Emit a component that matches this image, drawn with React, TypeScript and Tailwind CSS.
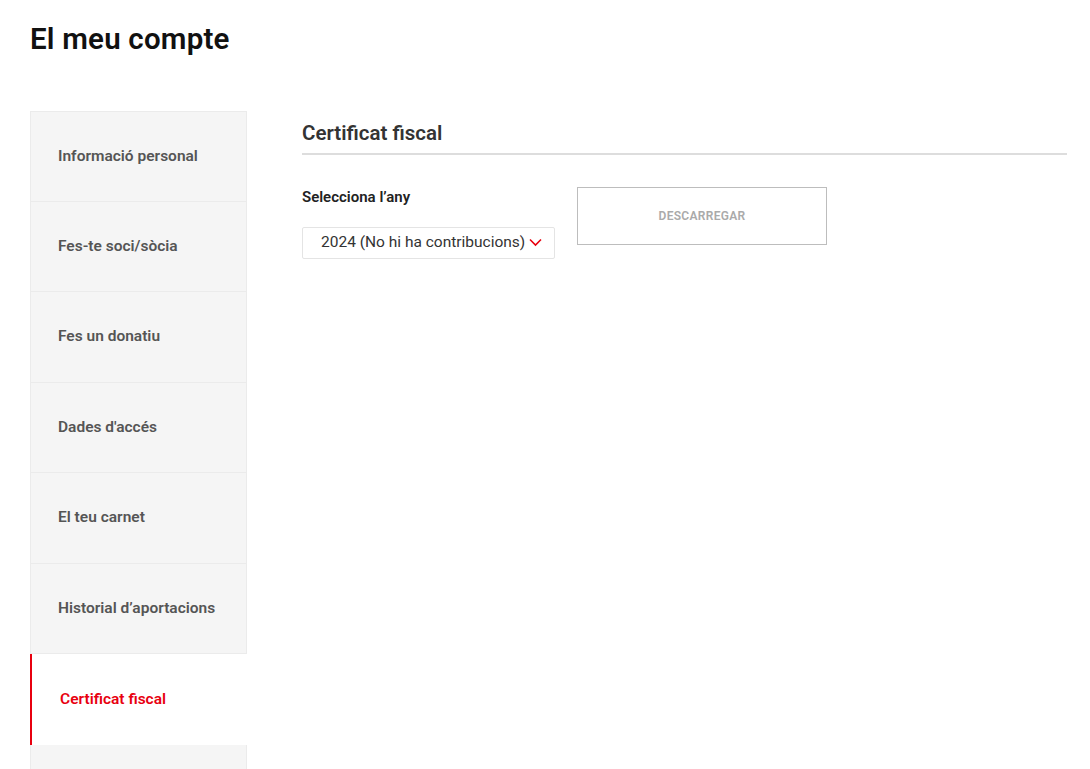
import React from "react";

const items = [
  "Informació personal",
  "Fes-te soci/sòcia",
  "Fes un donatiu",
  "Dades d'accés",
  "El teu carnet",
  "Historial d’aportacions",
  "Certificat fiscal",
  "",
];

const App = () => {
  return (
    <div className="min-h-screen bg-white pl-[30px] pr-[23px] pt-[22px] text-[#333]" style={{ fontFamily: "Roboto, 'Liberation Sans', sans-serif" }}>
      <h1 className="text-[29.5px] font-semibold text-[#111] leading-[34px] tracking-[0.2px]">El meu compte</h1>
      <div className="flex mt-[55px] gap-[55px]">
        <ul className="w-[217px] shrink-0">
          {items.map((label, i) => {
            const active = label === "Certificat fiscal";
            return (
              <li
                key={i}
                className={
                  active
                    ? "h-[90.5px] flex items-center bg-white border-l-2 border-[#e8000f] pl-[28px] text-[15.5px] font-semibold text-[#e8000f]"
                    : "h-[90.5px] flex items-center bg-[#f5f5f5] border border-[#ebebeb] border-t-0 first:border-t pl-[27px] text-[15.5px] font-semibold text-[#555]"
                }
              >
                {label}
              </li>
            );
          })}
        </ul>
        <div className="flex-1 pt-[10px]">
          <h2 className="text-[20.5px] font-semibold text-[#333] pb-[8px] border-b-2 border-[#ddd] leading-[24px]">Certificat fiscal</h2>
          <div className="flex gap-[22px] mt-[32px]">
            <div>
              <div className="text-[15px] font-semibold text-[#222] mt-[-1px]">Selecciona l’any</div>
              <div className="mt-[18px] w-[253px] h-[32px] border border-[#e4e4e4] rounded-[2px] flex items-center pl-[18px] text-[15.5px] text-[#333]">
                2024 (No hi ha contribucions)
                <svg className="ml-[4px]" width="13" height="9" viewBox="0 0 13 9" fill="none" stroke="#e8000f" strokeWidth="1.6">
                  <path d="M1 1.5l5.5 5.5 5.5-5.5" />
                </svg>
              </div>
            </div>
            <button className="w-[250px] h-[58px] border border-[#bdbdbd] text-[12px] font-semibold text-[#aaa] tracking-wide">DESCARREGAR</button>
          </div>
        </div>
      </div>
    </div>
  );
};

export default App;
